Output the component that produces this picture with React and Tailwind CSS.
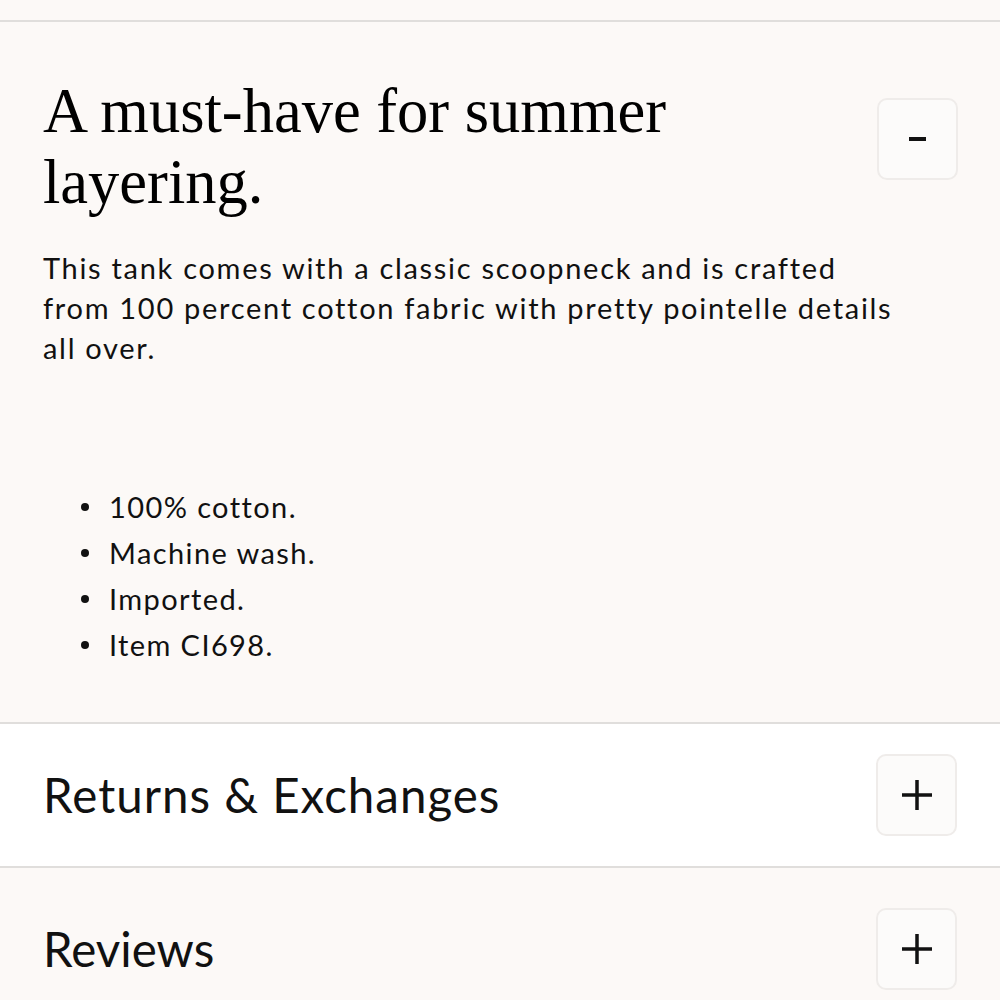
import React from "react";

const sans = { fontFamily: "Lato, 'Noto Sans', sans-serif" };

function ToggleButton({ open }) {
  return (
    <button
      className="flex h-[82px] w-[81px] shrink-0 items-center justify-center rounded-[10px] border-2 border-[#efecea] bg-[#fcfbfa]"
      aria-label={open ? "Collapse" : "Expand"}
    >
      {open ? (
        <span className="block h-[4px] w-[17px] bg-[#111]" />
      ) : (
        <svg width="32" height="32" viewBox="0 0 32 32" fill="none">
          <path d="M16 1v30M1 16h30" stroke="#111" strokeWidth="3.5" />
        </svg>
      )}
    </button>
  );
}

export default function App() {
  return (
    <div className="min-h-[1000px] w-[1000px] bg-[#fcf9f7] text-[#111]" style={sans}>
      <div className="h-[20px]" />
      <div className="border-t-2 border-[#e0dedc]" />

      {/* Description panel (expanded) */}
      <section className="px-[43px] pb-[54px] pt-[54px]">
        <div className="flex items-start justify-between">
          <h2
            className="max-w-[720px] text-[62.5px] leading-[71px] text-black"
            style={{ fontFamily: "'Liberation Serif', 'Times New Roman', serif" }}
          >
            A must-have for summer layering.
          </h2>
          <div className="mr-[-1px] mt-[22px]">
            <ToggleButton open />
          </div>
        </div>
        <p className="mt-[30px] max-w-[852px] text-[29px] leading-[40px] tracking-[1.7px]">
          This tank comes with a classic scoopneck and is crafted from 100 percent cotton fabric with pretty pointelle details all over.
        </p>
        <ul className="mt-[116px] flex flex-col text-[29px] leading-[46px] tracking-[1.4px]">
          {["100% cotton.", "Machine wash.", "Imported.", "Item CI698."].map((t) => (
            <li key={t} className="flex items-center">
              <span className="ml-[38px] mr-[20px] block h-[8px] w-[8px] rounded-full bg-[#111]" />
              {t}
            </li>
          ))}
        </ul>
      </section>

      <div className="border-t-2 border-[#e0dedc]" />

      {/* Returns & Exchanges */}
      <section className="flex items-center justify-between bg-white px-[43px] py-[30px]">
        <h3 className="text-[47.5px] leading-[56px] tracking-[1px]">Returns &amp; Exchanges</h3>
        <ToggleButton />
      </section>

      <div className="border-t-2 border-[#e0dedc]" />

      {/* Reviews */}
      <section className="flex items-center justify-between px-[43px] pb-[20px] pt-[40px]">
        <h3 className="text-[47.5px] leading-[56px]">Reviews</h3>
        <ToggleButton />
      </section>
    </div>
  );
}
